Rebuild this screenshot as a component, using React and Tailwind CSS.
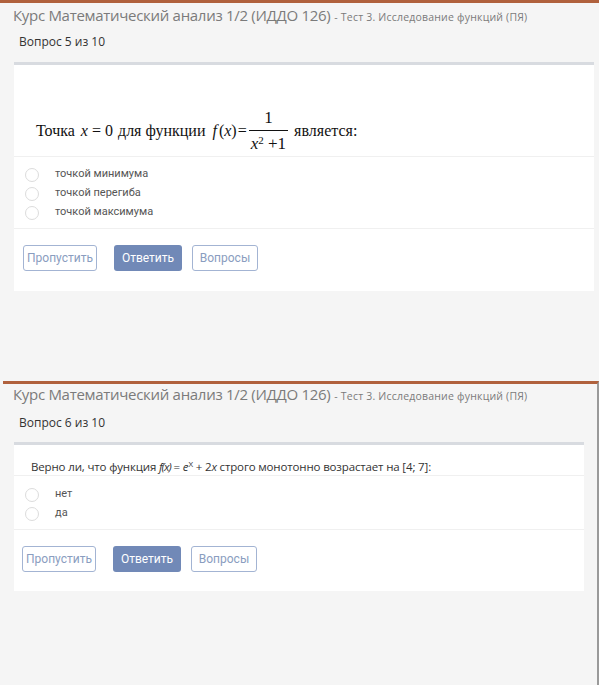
import React from "react";

const ui = { fontFamily: '"Open Sans", "Noto Sans", sans-serif' };
const rb = { fontFamily: 'Roboto, "Liberation Sans", sans-serif' };
const serif = { fontFamily: '"Liberation Serif", "Times New Roman", serif' };

function Radio({ label }) {
  return (
    <div className="flex items-center h-[19px]">
      <span className="ml-[11px] w-[14px] h-[14px] rounded-full border border-[#dcdcdc] bg-white shrink-0" />
      <span className="ml-[16px] text-[11px] text-[#555]" style={rb}>{label}</span>
    </div>
  );
}

function Buttons({ pt, pb, left }) {
  return (
    <div className={`flex items-center ${pt} ${pb} ${left}`} style={rb}>
      <button className="h-[26px] w-[74px] rounded-[3px] border border-[#a3b4d3] bg-white text-[12px] text-[#8a9dc0]">Пропустить</button>
      <button className="ml-[17px] h-[26px] w-[68px] rounded-[3px] bg-[#7189b7] text-[12px] text-white">Ответить</button>
      <button className="ml-[10px] h-[26px] w-[66px] rounded-[3px] border border-[#a3b4d3] bg-white text-[12px] text-[#8a9dc0]">Вопросы</button>
    </div>
  );
}

function Header() {
  return (
    <div className="flex items-baseline h-[24px] whitespace-nowrap" style={ui}>
      <span className="text-[15px] text-[#7b7b7b] tracking-[-0.3px]">Курс Математический анализ 1/2 (ИДДО 126)</span>
      <span className="ml-[4px] text-[10.5px] text-[#7b7b7b] tracking-[0.2px]">- Тест 3. Исследование функций (ПЯ)</span>
    </div>
  );
}

export default function App() {
  return (
    <div className="w-[599px] h-[685px] bg-[#f5f5f5] overflow-hidden flex flex-col">
      {/* first screenshot */}
      <div className="h-[381px] shrink-0 border-t-[3px] border-[#b0613d]">
        <div className="pl-[13px] pt-[1px]">
          <Header />
        </div>
        <div className="pl-[19px] pt-[5px] h-[34px] text-[12px] text-[#333]" style={ui}>Вопрос 5 из 10</div>
        <div className="ml-[14px] w-[580px] bg-white border-t-[3px] border-[#d8dbe0]">
          <div className="h-[92px] flex items-end pl-[22px] pb-[4px] border-b border-[#f0f0f0]">
            <div className="flex items-center text-[16px] text-[#111]" style={serif}>
              <span>Точка</span>
              <span className="ml-[6px] italic">x</span>
              <span className="ml-[4px]">=</span>
              <span className="ml-[4px]">0</span>
              <span className="ml-[5px]">для функции</span>
              <span className="ml-[7px] italic">f</span>
              <span className="ml-[2px]">(</span><span className="italic">x</span><span>)</span>
              <span className="ml-[1px]">=</span>
              <span className="ml-[2px] flex flex-col items-center leading-none">
                <span className="pb-[4px] text-[17px]">1</span>
                <span className="border-t border-[#111] pt-[4px] px-[2px] whitespace-nowrap text-[17px]">
                  <span className="italic">x</span><sup className="text-[11px]">2</sup> +1
                </span>
              </span>
              <span className="ml-[6px]">является:</span>
            </div>
          </div>
          <div className="pt-[8px] pb-[6px] border-b border-[#f0f0f0]">
            <Radio label="точкой минимума" />
            <Radio label="точкой перегиба" />
            <Radio label="точкой максимума" />
          </div>
          <Buttons pt="pt-[16px]" pb="pb-[20px]" left="pl-[9px]" />
        </div>
      </div>

      {/* second screenshot */}
      <div className="flex-1 ml-[3px] border-t-[3px] border-[#b0613d] border-r-[2px] border-r-[#9a9a9a]">
        <div className="pl-[10px] -mt-[1px]">
          <Header />
        </div>
        <div className="pl-[16px] pt-[7px] h-[35px] text-[12px] text-[#333]" style={ui}>Вопрос 6 из 10</div>
        <div className="ml-[11px] w-[570px] bg-white border-t-[3px] border-[#d8dbe0]">
          <div className="h-[31px] pt-[14px] pl-[17px] border-b border-[#f0f0f0] text-[11.5px] leading-[16px] text-[#333] whitespace-nowrap tracking-[-0.15px]" style={ui}>
            Верно ли, что функция <i className="tracking-[-1px]">f(x)</i> = <i>e</i><sup className="text-[8px]">X</sup> + 2<i>x</i> строго монотонно возрастает на [4; 7]:
          </div>
          <div className="pt-[9px] pb-[6px] border-b border-[#f0f0f0]">
            <Radio label="нет" />
            <Radio label="да" />
          </div>
          <Buttons pt="pt-[16px]" pb="pb-[19px]" left="pl-[8px]" />
        </div>
      </div>
    </div>
  );
}
